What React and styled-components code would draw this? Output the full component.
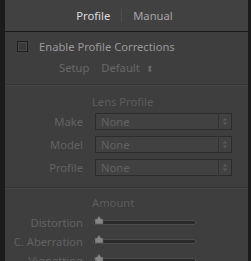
import React from "react";
import styled, { createGlobalStyle } from "styled-components";

const Global = createGlobalStyle`
  html, body { margin: 0; padding: 0; background: #3d3d3d; }
  body { font-family: "Noto Sans", "Open Sans", sans-serif; }
`;

const Panel = styled.div`
  width: 251px;
  height: 261px;
  box-sizing: border-box;
  overflow: hidden;
  background: #3e3e3e;
  border-left: 5px solid #1b1b1b;
  border-right: 3px solid #1b1b1b;
  display: flex;
  flex-direction: column;
`;

const TabBar = styled.div`
  height: 31px;
  flex: none;
  background: #414141;
  border-bottom: 1px solid #181818;
  display: flex;
  align-items: center;
  justify-content: center;
  padding-right: 4px;
`;

const Tab = styled.span`
  font-size: 11.2px;
  color: ${({ active }) => (active ? "#dcdcdc" : "#a9a3a9")};
  padding: 0 11px;
`;

const TabDivider = styled.span`
  width: 1px;
  height: 13px;
  background: #4e4e4e;
`;

const Section = styled.div`
  border-bottom: 1px solid #363636;
  box-shadow: 0 1px 0 #444;
  padding: ${({ pad }) => pad};
  display: flex;
  flex-direction: column;
  flex: none;
`;

const CheckRow = styled.label`
  display: flex;
  align-items: center;
  gap: 11px;
  padding-left: 12px;
  font-size: 11.2px;
  color: #9b979b;
`;

const Box = styled.span`
  width: 9px;
  height: 9px;
  border: 1px solid #1e1e1e;
  background: #3a3a3a;
  box-shadow: inset 0 0 0 1px #4a4a4a;
`;

const SetupRow = styled.div`
  display: flex;
  align-items: center;
  margin-top: 6px;
  padding-left: 54px;
  font-size: 11.2px;
  color: #686868;
  gap: 12px;
`;

const Stepper = styled.span`
  font-size: 9px;
  margin-left: 6px;
`;

const Heading = styled.div`
  font-size: 11.2px;
  color: #5c5c5c;
  padding-left: 87px;
  height: 17px;
`;

const FieldGrid = styled.div`
  display: grid;
  grid-template-columns: 78px 137px;
  column-gap: 12px;
  row-gap: ${({ gap }) => gap};
  align-items: center;
  margin-top: ${({ top }) => top || "0"};
`;

const Label = styled.span`
  font-size: 11.2px;
  color: #626262;
  text-align: right;
  white-space: nowrap;
`;

const Select = styled.div`
  height: 15px;
  border: 1px solid #2c2c2c;
  background: #414141;
  display: flex;
  align-items: center;
  font-size: 11.2px;
  color: #626262;
`;

const SelectText = styled.span`
  flex: 1;
  padding-left: 5px;
  line-height: 15px;
`;

const SelectArrows = styled.span`
  width: 12px;
  height: 15px;
  border-left: 1px solid #333;
  display: flex;
  align-items: center;
  justify-content: center;
`;

const Track = styled.div`
  position: relative;
  width: 101px;
  height: 3px;
  margin-left: -2px;
  background: #2a2a2a;
  border: 1px solid #4c4c4c;
  border-radius: 2px;
`;

const Thumb = styled.svg`
  position: absolute;
  left: 0px;
  top: -5px;
`;

const Arrows = () => (
  <svg width="6" height="9" viewBox="0 0 6 9">
    <path d="M3 1 L5.5 3.5 H0.5 Z M3 8 L5.5 5.5 H0.5 Z" fill="#5a5a5a" />
  </svg>
);

const Slider = () => (
  <Track>
    <Thumb width="10" height="9" viewBox="0 0 10 9">
      <path d="M5 0 L7 3 H9 V8 H1 V3 H3 Z" fill="#858585" stroke="#555" strokeWidth="0.6" />
    </Thumb>
  </Track>
);

const lensFields = ["Make", "Model", "Profile"];
const amounts = ["Distortion", "C. Aberration", "Vignetting"];

export default function App() {
  return (
    <>
      <Global />
      <Panel>
        <TabBar>
          <Tab active>Profile</Tab>
          <TabDivider />
          <Tab>Manual</Tab>
        </TabBar>
        <Section pad="7px 0 9px 0">
          <CheckRow>
            <Box />
            Enable Profile Corrections
          </CheckRow>
          <SetupRow>
            <span>Setup</span>
            <span>
              Default<Stepper>⬍</Stepper>
            </span>
          </SetupRow>
        </Section>
        <Section pad="9px 0 11px 0">
          <Heading>Lens Profile</Heading>
          <FieldGrid gap="6px" top="2px">
            {lensFields.map((f) => (
              <React.Fragment key={f}>
                <Label>{f}</Label>
                <Select>
                  <SelectText>None</SelectText>
                  <SelectArrows>
                    <Arrows />
                  </SelectArrows>
                </Select>
              </React.Fragment>
            ))}
          </FieldGrid>
        </Section>
        <Section pad="7px 0 0 0">
          <Heading>Amount</Heading>
          <FieldGrid gap="4px" top="3px">
            {amounts.map((a) => (
              <React.Fragment key={a}>
                <Label>{a}</Label>
                <Slider />
              </React.Fragment>
            ))}
          </FieldGrid>
        </Section>
      </Panel>
    </>
  );
}
